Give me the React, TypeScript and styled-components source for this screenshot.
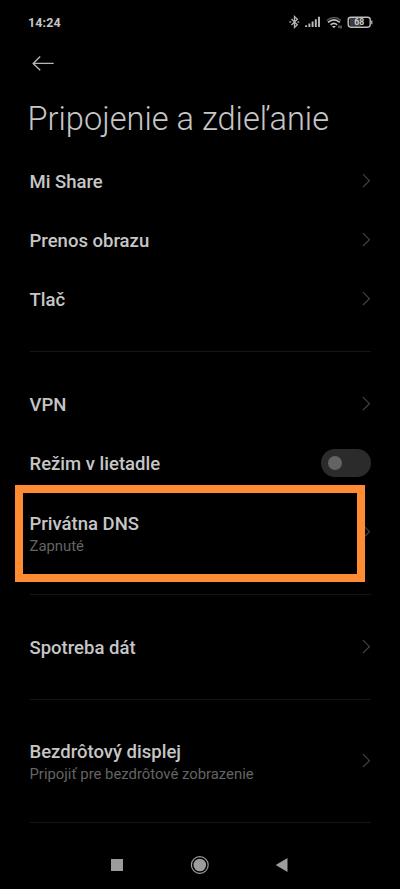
import React from 'react';
import styled, { createGlobalStyle } from 'styled-components';

const GlobalStyle = createGlobalStyle`
  * { box-sizing: border-box; }
  body { margin: 0; background: #000; font-family: Roboto, sans-serif; }
`;

const Screen = styled.main`
  width: 400px;
  height: 889px;
  overflow: hidden;
  display: flex;
  flex-direction: column;
  background: #000;
  color: #c6c6c6;
`;

const StatusBar = styled.header`
  height: 44px;
  padding: 0 27px 0 28px;
  display: flex;
  align-items: center;
  justify-content: space-between;
  flex: none;
`;

const Clock = styled.time`
  padding-top: 1px;
  font-size: 12.5px;
  font-weight: 700;
  letter-spacing: 0.1px;
  line-height: 17px;
`;

const StatusIcons = styled.svg`
  width: 86px;
  height: 16px;
  display: block;
`;

const BatteryLevel = styled.text`
  font: 700 8.6px Roboto, sans-serif;
  fill: #d0d0d0;
`;

const BackButton = styled.button`
  width: 24px;
  height: 20px;
  margin: 9px 0 0 31px;
  padding: 0;
  border: 0;
  background: none;
  flex: none;
  svg { display: block; }
`;

const Title = styled.h1`
  margin: 26px 0 0 27.5px;
  height: 52.5px;
  font-size: 32.6px;
  font-weight: 300;
  line-height: 40px;
  white-space: nowrap;
  flex: none;
`;

const Settings = styled.div`
  padding: 0 29.5px;
  flex: 1;
`;

const Group = styled.section`
  & + & {
    margin-top: 22.2px;
    border-top: 1px solid #151515;
    padding-top: 22.2px;
  }
  &:last-child {
    border-bottom: 1px solid #151515;
    padding-bottom: 21.3px;
  }
`;

const Row = styled.div<{ $tall?: boolean }>`
  position: relative;
  height: ${({ $tall }) => ($tall ? 79 : 59.2)}px;
  display: flex;
  align-items: center;
  justify-content: space-between;
`;

const RowText = styled.div<{ $tall?: boolean }>`
  padding-top: ${({ $tall }) => ($tall ? 3.4 : 1.8)}px;
`;

const Label = styled.div`
  font-size: 18.5px;
  font-weight: 500;
  line-height: 24px;
  white-space: nowrap;
`;

const Detail = styled.div`
  font-size: 14.85px;
  line-height: 21px;
  color: #646464;
  white-space: nowrap;
`;

const Arrow = styled.svg`
  width: 10px;
  height: 16px;
  flex: none;
  display: block;
`;

const Switch = styled.span`
  width: 50px;
  height: 28px;
  padding: 7px;
  border-radius: 14px;
  background: #2b2b2b;
  &::before {
    content: '';
    display: block;
    width: 14px;
    height: 14px;
    border-radius: 50%;
    background: #636363;
  }
`;

const Highlight = styled.div`
  position: absolute;
  left: -14.5px;
  top: -8px;
  width: 350.4px;
  height: 97px;
  border: 8px solid #ff8c32;
`;

const NavBar = styled.nav`
  height: 48px;
  flex: none;
  display: flex;
  justify-content: center;
  svg { display: block; }
`;

interface Item {
  label: string;
  detail?: string;
  toggle?: boolean;
  highlighted?: boolean;
}

const groups: Item[][] = [
  [{ label: 'Mi Share' }, { label: 'Prenos obrazu' }, { label: 'Tlač' }],
  [
    { label: 'VPN' },
    { label: 'Režim v lietadle', toggle: true },
    { label: 'Privátna DNS', detail: 'Zapnuté', highlighted: true },
  ],
  [{ label: 'Spotreba dát' }],
  [{ label: 'Bezdrôtový displej', detail: 'Pripojiť pre bezdrôtové zobrazenie' }],
];

function SettingRow({ label, detail, toggle, highlighted }: Item) {
  return (
    <Row $tall={Boolean(detail)}>
      <RowText $tall={Boolean(detail)}>
        <Label>{label}</Label>
        {detail && <Detail>{detail}</Detail>}
      </RowText>
      {toggle ? (
        <Switch role="switch" aria-checked={false} />
      ) : (
        <Arrow viewBox="0 0 10 16" fill="none" stroke="#484848" strokeWidth="1.1">
          <path d="M1.9 1.2L8.4 7.7L1.9 14.2" />
        </Arrow>
      )}
      {highlighted && <Highlight />}
    </Row>
  );
}

export default function App() {
  return (
    <>
      <GlobalStyle />
      <Screen>
        <StatusBar>
          <Clock>14:24</Clock>
          <StatusIcons viewBox="0 0 86 16" fill="none">
            <g transform="translate(0.8 0)">
              <path d="M3.7 5L9.5 10.8L6.7 13.4V2.6L9.5 5.2L3.7 11" stroke="#b5b5b5" strokeWidth="1.3" />
              <path d="M1.6 8h1.8M9.6 8h1.8" stroke="#a0a0a0" strokeWidth="1.6" />
            </g>
            <path d="M19.2 13v-1.8M22.4 13v-3.4M25.6 13v-5.4M28.8 13v-7.8M32 13V2.8" stroke="#bdbdbd" strokeWidth="1.9" />
            <g transform="translate(-2.4 0)">
              <path d="M42.2 6.5Q49.3 0.4 56.4 6.5" stroke="#555" strokeWidth="1.5" />
              <path d="M43.4 8.4Q49.3 3.2 55.2 8.4M46 10.8Q49.3 8 52.6 10.8" stroke="#c4c4c4" strokeWidth="1.6" />
              <path d="M47.3 12L49.3 14.2L51.3 12Z" fill="#c4c4c4" />
              <path d="M54.4 11.5v2.6M56.4 11.5v3" stroke="#a0a0a0" strokeWidth="1" />
            </g>
            <rect x="62.5" y="4" width="11" height="8.4" fill="#3c3c3c" />
            <rect x="61.2" y="3.2" width="22" height="10" rx="2.6" stroke="#bdbdbd" strokeWidth="1.4" />
            <path d="M84.8 6.4v3.8" stroke="#bdbdbd" strokeWidth="1.2" />
            <BatteryLevel x="72.2" y="11.3" textAnchor="middle">68</BatteryLevel>
          </StatusIcons>
        </StatusBar>
        <BackButton aria-label="Späť">
          <svg width="24" height="20" fill="none" stroke="#b5b5b5" strokeWidth="1.4">
            <path d="M9.2 3.6L2.2 10.4L9.2 17.2M2.2 10.4H22.7" />
          </svg>
        </BackButton>
        <Title>Pripojenie a zdieľanie</Title>
        <Settings>
          {groups.map((items) => (
            <Group key={items[0].label}>
              {items.map((item) => (
                <SettingRow key={item.label} {...item} />
              ))}
            </Group>
          ))}
        </Settings>
        <NavBar>
          <svg width="200" height="48" fill="#9c9c9c">
            <rect x="11" y="18" width="12" height="12" />
            <circle cx="99.8" cy="24" r="6.3" />
            <circle cx="99.8" cy="24" r="8.4" fill="none" stroke="#9c9c9c" strokeWidth="1.2" />
            <path d="M175.7 24L187.5 17V31Z" />
          </svg>
        </NavBar>
      </Screen>
    </>
  );
}
